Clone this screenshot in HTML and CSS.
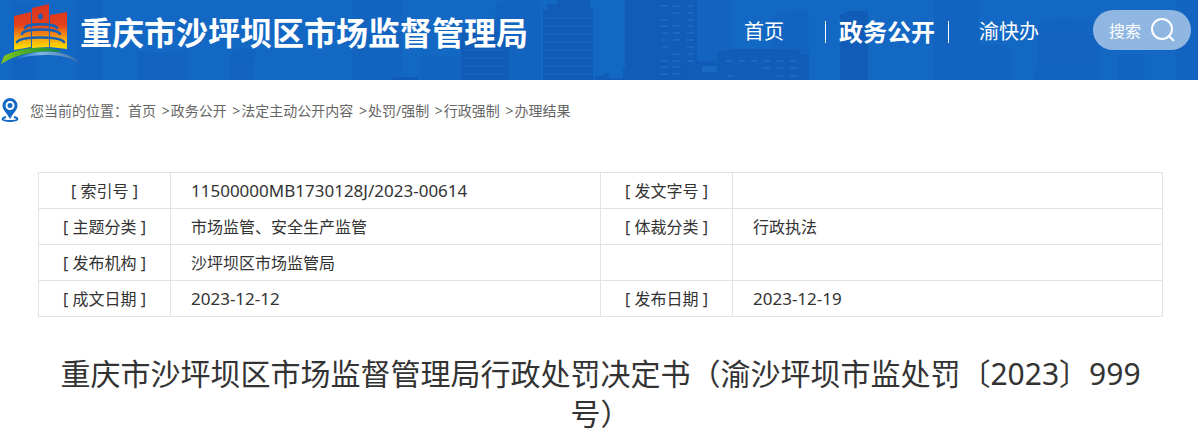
FILE: index.html
```html
<!DOCTYPE html>
<html lang="zh-CN">
<head>
    <meta charset="UTF-8">
    <meta name="viewport" content="width=device-width, initial-scale=1.0">
    <title>重庆市沙坪坝区市场监督管理局</title>
    <link rel="stylesheet" href="styles.css">
</head>
<body>
    <header class="header">
        <!-- Skyline -->
        <svg class="skyline" viewBox="0 0 1198 80" preserveAspectRatio="xMidYMid slice" aria-hidden="true">
            <defs>
                <pattern id="dots" width="8" height="8" patternUnits="userSpaceOnUse">
                    <path d="M1 2h2M5 2h2" stroke="#1967c3" stroke-width="2"/>
                </pattern>
            </defs>
            <g fill="#1364c0">
                <path d="M13 4h23v76H13zM76 8V0h26v80H76zM138 52h50v28h-50zM230 64v-9l5-6h19v31h-24z"/>
                <path d="M352 0h50v80h-50zM420 56h40v24h-40zM495 5l4-4h38l4 4v75h-46zM696 0h36v80h-36z"/>
                <path d="M774 16l20-6h15v70h-35zM934 0h45v80h-45zM967 48l5-3h34l5 3v32h-44zM1038 24l25-7 38 7v56h-63z"/>
                <path d="M1034 71h66v9h-66zM1118 54h27v26h-27zM1176 0h22v80h-22z"/>
            </g>
            <g fill="#105cb7">
                <path d="M461 31h48v49h-48zM543 10h4V4h10V0h33v9h3v71h-50zM625 0h72v80h-72zM840 15l9-4h19v69h-28z"/>
                <path d="M717 52l5-3h76l3 6h8v25h-92zM686 65l6-4h29v11h7v8h-44zM595 80v-4h8v-3h6v5h14V68h8v8h10v4zM393 77h25v3h-25z"/>
            </g>
            <path fill="url(#dots)" d="M144 56h40v24h-40zM232 64h24v16h-24zM464 48h40v32h-40zM544 12h48v68h-48zM696 0h32v56h-32zM1040 26h56v40h-56z"/>
            <g fill="none" stroke="#1968c4" stroke-width="2">
                <path d="M661 6h7M661 20h7M661 26h7M661 33h7M661 40h7M661 47h7M661 61h7M661 67h7M661 74h7"/>
                <path d="M673 6h7M673 13h7M673 26h7M673 33h7M673 40h7M673 54h7M673 61h7M673 67h7M673 74h7"/>
                <path d="M687 6h7M687 13h7M687 20h7M687 26h7M687 33h7M687 40h7M687 47h7M687 54h7M687 61h7"/>
                <path d="M726 61h7M738 61h7M751 61h7M763 61h7M776 61h7M790 61h7M763 68h7M776 68h7M790 68h7M728 76h5M776 76h7M790 76h7"/>
            </g>
            <path fill="#1968c4" d="M702 66h15v6h-15z"/>
        </svg>

        <a class="brand" href="#">
            <svg class="logo" viewBox="0 0 80 66" aria-hidden="true">
                <defs>
                    <linearGradient id="tower" x1="0" y1="4" x2="0" y2="50" gradientUnits="userSpaceOnUse">
                        <stop offset="0" stop-color="#d93422"/>
                        <stop offset="0.45" stop-color="#e4401c"/>
                        <stop offset="0.72" stop-color="#f39a12"/>
                        <stop offset="1" stop-color="#ffe900"/>
                    </linearGradient>
                    <linearGradient id="hill" x1="0" y1="0" x2="1" y2="0">
                        <stop offset="0" stop-color="#86c51d"/>
                        <stop offset="0.5" stop-color="#3fa42c"/>
                        <stop offset="1" stop-color="#168744"/>
                    </linearGradient>
                    <linearGradient id="river" x1="0" y1="0" x2="1" y2="0">
                        <stop offset="0" stop-color="#1a70c8"/>
                        <stop offset="0.4" stop-color="#7fb3e2"/>
                        <stop offset="1" stop-color="#3c6d9e"/>
                    </linearGradient>
                </defs>
                <path fill="url(#tower)" d="M14 16l17-4v35l-17 3zM32 8l17-4v43l-17 1zM50 15l17-3v37l-17-2z"/>
                <path fill="#1260b8" d="M40.500 13q5 3.500 0 7q-5-3.500 0-7z"/>
                <g fill="none" stroke="#1260b8" stroke-width="2.500" stroke-linecap="round">
                    <path d="M25 28c1-5 31-5 32 0M22 34c2-6 35-6 38 0M17 42c5-6 42-6 47 0"/>
                </g>
                <path fill="url(#hill)" d="M1 64l3-8c17-9 43-11 59-4C38 50 18 53 1 64z"/>
                <path fill="url(#river)" d="M15 59c20-10 50-11 65 4C64 53 39 53 15 59z"/>
            </svg>
            <span class="site-name">重庆市沙坪坝区市场监督管理局</span>
        </a>

        <nav class="nav">
            <a href="#">首页</a>
            <a class="active" href="#">政务公开</a>
            <a href="#">渝快办</a>
        </nav>

        <button class="search" type="button">
            搜索
            <svg class="search-icon" viewBox="0 0 24 24" aria-hidden="true">
                <circle cx="11" cy="11" r="10"/>
                <path d="M18 18l5 5"/>
            </svg>
        </button>
    </header>

    <!-- Breadcrumb -->
    <div class="location">
        <svg class="pin" viewBox="0 0 18 24" aria-hidden="true">
            <path class="pin-base" d="M5 19c-5 1-5 4 4 4s9-3 4-4"/>
            <path class="pin-body" fill-rule="evenodd" d="M9 0a7.500 7.500 0 0 1 7.500 7.500C16.500 12 12 15 9 21C6 15 1.500 12 1.500 7.500A7.500 7.500 0 0 1 9 0zM9 3a4.500 4.500 0 1 0 0 9a4.500 4.500 0 1 0 0-9z"/>
            <circle class="pin-body" cx="9" cy="7.500" r="2.500"/>
        </svg>
        <nav class="crumbs">
            您当前的位置<span class="colon">：</span><a href="#">首页</a> &gt;<a href="#">政务公开</a> &gt;<a href="#">法定主动公开内容</a> &gt;<a href="#">处罚/强制</a> &gt;<a href="#">行政强制</a> &gt;<a href="#">办理结果</a>
        </nav>
    </div>

    <main class="content">
        <table class="info">
            <colgroup>
                <col class="col-label">
                <col>
                <col class="col-label">
                <col>
            </colgroup>
            <tr>
                <th scope="row">[ 索引号 ]</th>
                <td class="number">11500000MB1730128J/2023-00614</td>
                <th scope="row">[ 发文字号 ]</th>
                <td></td>
            </tr>
            <tr>
                <th scope="row">[ 主题分类 ]</th>
                <td>市场监管、安全生产监管</td>
                <th scope="row">[ 体裁分类 ]</th>
                <td>行政执法</td>
            </tr>
            <tr>
                <th scope="row">[ 发布机构 ]</th>
                <td>沙坪坝区市场监管局</td>
                <td></td>
                <td></td>
            </tr>
            <tr>
                <th scope="row">[ 成文日期 ]</th>
                <td class="number">2023-12-12</td>
                <th scope="row">[ 发布日期 ]</th>
                <td class="number">2023-12-19</td>
            </tr>
        </table>

        <h1 class="title">重庆市沙坪坝区市场监督管理局行政处罚决定书（渝沙坪坝市监处罚〔2023〕999号）</h1>
    </main>
</body>
</html>
```
FILE: styles.css
```css
* {
    box-sizing: border-box;
}
body {
    margin: 0;
    background-color: #fff;
    color: #333;
    font-family: "Noto Sans", "Noto Sans CJK SC", sans-serif;
    font-size: 16px;
}
a {
    color: inherit;
    text-decoration: none;
}

/* Header */
.header {
    position: relative;
    display: flex;
    align-items: center;
    height: 80px;
    padding-right: 7px;
    background-color: #1368c4;
    color: #fff;
}
.skyline {
    position: absolute;
    top: 0;
    left: 0;
    width: 100%;
    height: 100%;
}
.brand,
.nav,
.search {
    position: relative;
}
.brand {
    display: flex;
    align-items: flex-start;
    height: 80px;
    margin-right: auto;
}
.logo {
    width: 80px;
    height: 66px;
}
.site-name {
    font-size: 32px;
    font-weight: bold;
    line-height: 66px;
}
.nav {
    display: flex;
    align-items: center;
    height: 64px;
    margin-bottom: 16px;
    font-size: 20px;
    line-height: 22px;
}
.nav .active {
    margin: 0 30px 0 41px;
    padding: 0 13px;
    border: solid #fff;
    border-width: 0 1px;
    font-size: 24px;
    font-weight: bold;
}
.search {
    display: flex;
    align-items: center;
    justify-content: center;
    gap: 10px;
    width: 98px;
    height: 40px;
    margin: 0 0 20px 54px;
    padding: 0;
    border: none;
    border-radius: 20px;
    background-color: #8fb7e2;
    color: #fff;
    font-family: inherit;
    font-size: 16px;
    cursor: pointer;
}
.search-icon {
    width: 24px;
    height: 24px;
    fill: none;
    stroke: #fff;
    stroke-width: 2;
}

/* Breadcrumb */
.location {
    display: flex;
    align-items: center;
    gap: 11px;
    height: 60px;
    padding-left: 1px;
    color: #666;
    font-size: 14px;
}
.pin {
    width: 18px;
    height: 24px;
}
.pin-body {
    fill: #1368c4;
}
.pin-base {
    fill: none;
    stroke: #1368c4;
    stroke-width: 2;
}
.colon {
    font-family: "Noto Sans CJK TC", sans-serif;
}
.crumbs a {
    margin-right: 2px;
}
.crumbs a + a {
    margin-left: 1px;
}

/* Document info */
.content {
    padding: 32px 35px 0 38px;
}
.info {
    width: 100%;
    border-collapse: collapse;
    table-layout: fixed;
}
.col-label {
    width: 132px;
}
.info th,
.info td {
    height: 36px;
    padding: 0 20px;
    border: 1px solid #e3e3e3;
    font-weight: normal;
    line-height: 24px;
    text-align: left;
}
.info th {
    padding: 0;
    text-align: center;
}
.info .number {
    font-size: 17px;
}
.title {
    margin: 37px 0 0;
    padding: 0 20px;
    font-size: 30px;
    font-weight: normal;
    line-height: 40px;
    text-align: center;
}
```
